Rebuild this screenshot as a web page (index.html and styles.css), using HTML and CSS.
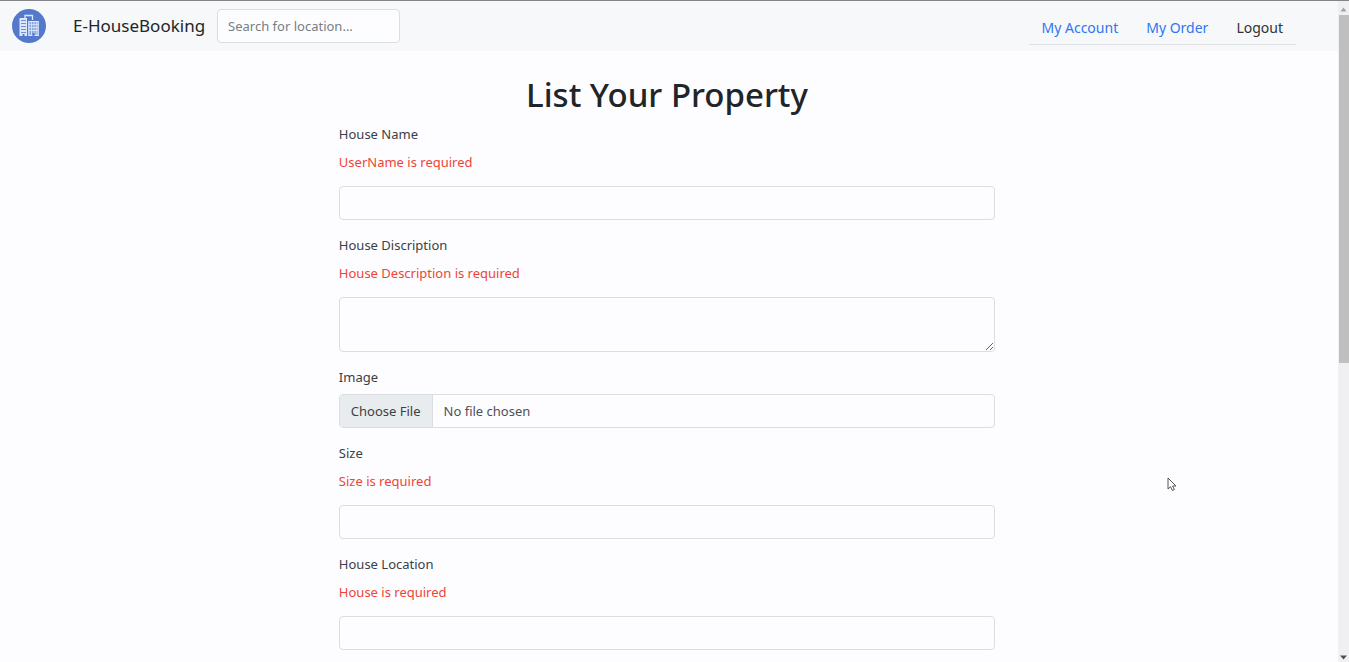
FILE: index.html
```html
<!DOCTYPE html>
<html lang="en">
<head>
  <meta charset="utf-8">
  <meta name="viewport" content="width=device-width, initial-scale=1">
  <title>E-HouseBooking</title>
  <link rel="stylesheet" href="styles.css">
</head>
<body>
  <div class="window">
    <div class="page">
      <header class="navbar">
        <svg class="logo" viewBox="0 0 34 34" aria-hidden="true">
          <circle cx="17" cy="17" r="17" fill="#5479cc"/>
          <path d="M7.500 9H15V27H7.500Z" fill="#dce8fa"/>
          <path d="M9 11.500H14M9 14.500H14M9 17.500H14M9 20.500H14M9 23.500H14" stroke="#6f90d8" stroke-width="1"/>
          <path d="M13 9V6.500H20.500V11" fill="none" stroke="#dce8fa" stroke-width="1.300"/>
          <path d="M16.800 26.500V12.500H26.200V26.500Z" fill="#86a3e0" stroke="#dce8fa" stroke-width="1.200"/>
          <path d="M19.500 13V26M22 13V26M24.300 13V26M17 15.500H26M17 18.500H26M17 21.500H26" stroke="#dce8fa" stroke-width=".8"/>
          <path d="M10.500 25H12.500V27H10.500ZM20.500 24H22.500V27H20.500Z" fill="#5479cc"/>
        </svg>
        <span class="brand">E-HouseBooking</span>
        <input class="control search" type="search" placeholder="Search for location..." aria-label="Search for location">
        <nav class="links">
          <a class="link" href="#account">My Account</a>
          <a class="link" href="#order">My Order</a>
          <button class="logout" type="button">Logout</button>
        </nav>
      </header>
      <main class="content">
        <h1 class="title">List Your Property</h1>
        <form class="form">
          <div class="field">
            <label class="label" for="name">House Name</label>
            <p class="error">UserName is required</p>
            <input class="control" id="name" type="text">
          </div>
          <div class="field">
            <label class="label" for="description">House Discription</label>
            <p class="error">House Description is required</p>
            <textarea class="control area" id="description"></textarea>
          </div>
          <div class="field">
            <label class="label" for="image">Image</label>
            <input class="control file" id="image" type="file">
          </div>
          <div class="field">
            <label class="label" for="size">Size</label>
            <p class="error">Size is required</p>
            <input class="control" id="size" type="text">
          </div>
          <div class="field">
            <label class="label" for="location">House Location</label>
            <p class="error">House is required</p>
            <input class="control" id="location" type="text">
          </div>
        </form>
      </main>
    </div>
    <div class="scrollbar" aria-hidden="true">
      <svg class="arrow" viewBox="0 0 11 14"><path d="M2.500 10.500L5.500 6.500L8.500 10.500Z" fill="#a3a3a3"/></svg>
      <div class="track"><div class="thumb"></div></div>
      <svg class="arrow" viewBox="0 0 11 14"><path d="M2 7.500H9L5.500 11.500Z" fill="#505050"/></svg>
    </div>
  </div>
  <svg class="cursor" viewBox="0 0 10 15" aria-hidden="true"><path d="M1 1V12L3.500 9.700L5.300 13.500L7.300 12.600L5.600 9H9Z" fill="#fff" stroke="#555" stroke-width="1"/></svg>
</body>
</html>
```
FILE: styles.css
```css
* {
  box-sizing: border-box;
}

body {
  margin: 0;
  background: #fdfdff;
  color: #212529;
  font-family: "Noto Sans", "Open Sans", sans-serif;
  font-size: 13px;
  line-height: 22px;
}

.window {
  display: grid;
  grid-template-columns: 1fr 11px;
  height: 100vh;
  overflow: hidden;
  border-top: 1px solid #858589;
}

.page {
  min-width: 0;
  overflow: hidden;
}

.navbar {
  display: flex;
  align-items: center;
  height: 50px;
  padding: 0 42px 0 12px;
  background: #f6f8fa;
}

.logo {
  width: 34px;
  height: 34px;
  margin-right: 27px;
}

.brand {
  margin-right: 12px;
  font-size: 17px;
  line-height: 26px;
}

.control {
  display: block;
  width: 100%;
  height: 34px;
  margin: 0;
  padding: 5px 11px;
  border: 1px solid #dadde1;
  border-radius: 4px;
  background: #fdfdff;
  color: #4c5157;
  font: inherit;
}

.search {
  width: 183px;
  padding: 5px 10px;
}

.search::placeholder {
  color: #777d83;
  opacity: 1;
}

.links {
  display: flex;
  align-items: center;
  gap: 28px;
  margin-left: auto;
  padding: 8px 13px 5px;
  align-self: flex-end;
  margin-bottom: 6px;
  border-bottom: 1px solid #dfe1e4;
  font-size: 14px;
}

.link {
  color: #2f76f0;
  text-decoration: none;
}

.logout {
  padding: 0;
  border: 0;
  background: none;
  color: #303338;
  font: inherit;
}

.content {
  padding: 22px 4px 0 0;
}

.title {
  margin: 0 0 6px;
  font-size: 33px;
  font-weight: 500;
  line-height: 44px;
  text-align: center;
}

.form {
  display: grid;
  gap: 14px;
  width: 49.2%;
  margin: 0 auto;
}

.label {
  display: block;
  margin-bottom: 6px;
  color: #3b4046;
}

.error {
  margin: 0 0 13px;
  color: #ee4436;
}

.area {
  height: 55px;
  resize: vertical;
}

.file {
  overflow: hidden;
}

.file::file-selector-button {
  height: 34px;
  margin: -6px 11px -6px -11px;
  padding: 5px 11px;
  border: 0;
  border-right: 1px solid #dadde1;
  background: #e9ecef;
  color: #3b4046;
  font: inherit;
}

.scrollbar {
  display: flex;
  flex-direction: column;
  background: #f0f0f2;
}

.arrow {
  width: 11px;
  height: 14px;
}

.track {
  flex: 1;
}

.thumb {
  height: 55%;
  margin-left: 1px;
  background: #bfbfc0;
}

.cursor {
  position: absolute;
  top: 477px;
  left: 1167px;
  width: 10px;
  height: 15px;
}
```
